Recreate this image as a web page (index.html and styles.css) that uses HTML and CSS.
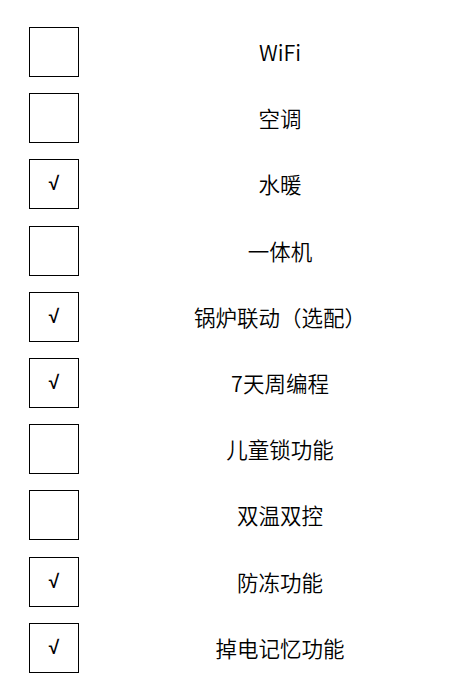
FILE: index.html
```html
<!DOCTYPE html>
<html lang="zh">
<head>
<meta charset="utf-8">
<link rel="stylesheet" href="styles.css">
</head>
<body>
<div class="list">
  <div class="row"><div class="box"></div><div class="label">WiFi</div></div>
  <div class="row"><div class="box"></div><div class="label">空调</div></div>
  <div class="row"><div class="box">√</div><div class="label">水暖</div></div>
  <div class="row"><div class="box"></div><div class="label">一体机</div></div>
  <div class="row"><div class="box">√</div><div class="label">锅炉联动（选配）</div></div>
  <div class="row"><div class="box">√</div><div class="label">7天周编程</div></div>
  <div class="row"><div class="box"></div><div class="label">儿童锁功能</div></div>
  <div class="row"><div class="box"></div><div class="label">双温双控</div></div>
  <div class="row"><div class="box">√</div><div class="label">防冻功能</div></div>
  <div class="row"><div class="box">√</div><div class="label">掉电记忆功能</div></div>
</div>
</body>
</html>
```

FILE: styles.css
```css
html, body {
  margin: 0;
  padding: 0;
  background: #fff;
}
body {
  font-family: "Noto Sans CJK SC", "Noto Sans", sans-serif;
  color: #000;
}
.list {
  display: flex;
  flex-direction: column;
  gap: 16.2px;
  padding: 27px 0 0 29px;
}
.row {
  display: grid;
  grid-template-columns: 50px 1fr;
  align-items: center;
  height: 50px;
}
.box {
  box-sizing: border-box;
  width: 50px;
  height: 50px;
  border: 1px solid #000;
  display: flex;
  align-items: center;
  justify-content: center;
  font-family: "Liberation Sans", sans-serif;
  font-size: 19px;
  font-weight: bold;
}
.label {
  padding-left: 28px;
  text-align: center;
  font-size: 21.5px;
  font-weight: 350;
  line-height: 48px;
}
```
